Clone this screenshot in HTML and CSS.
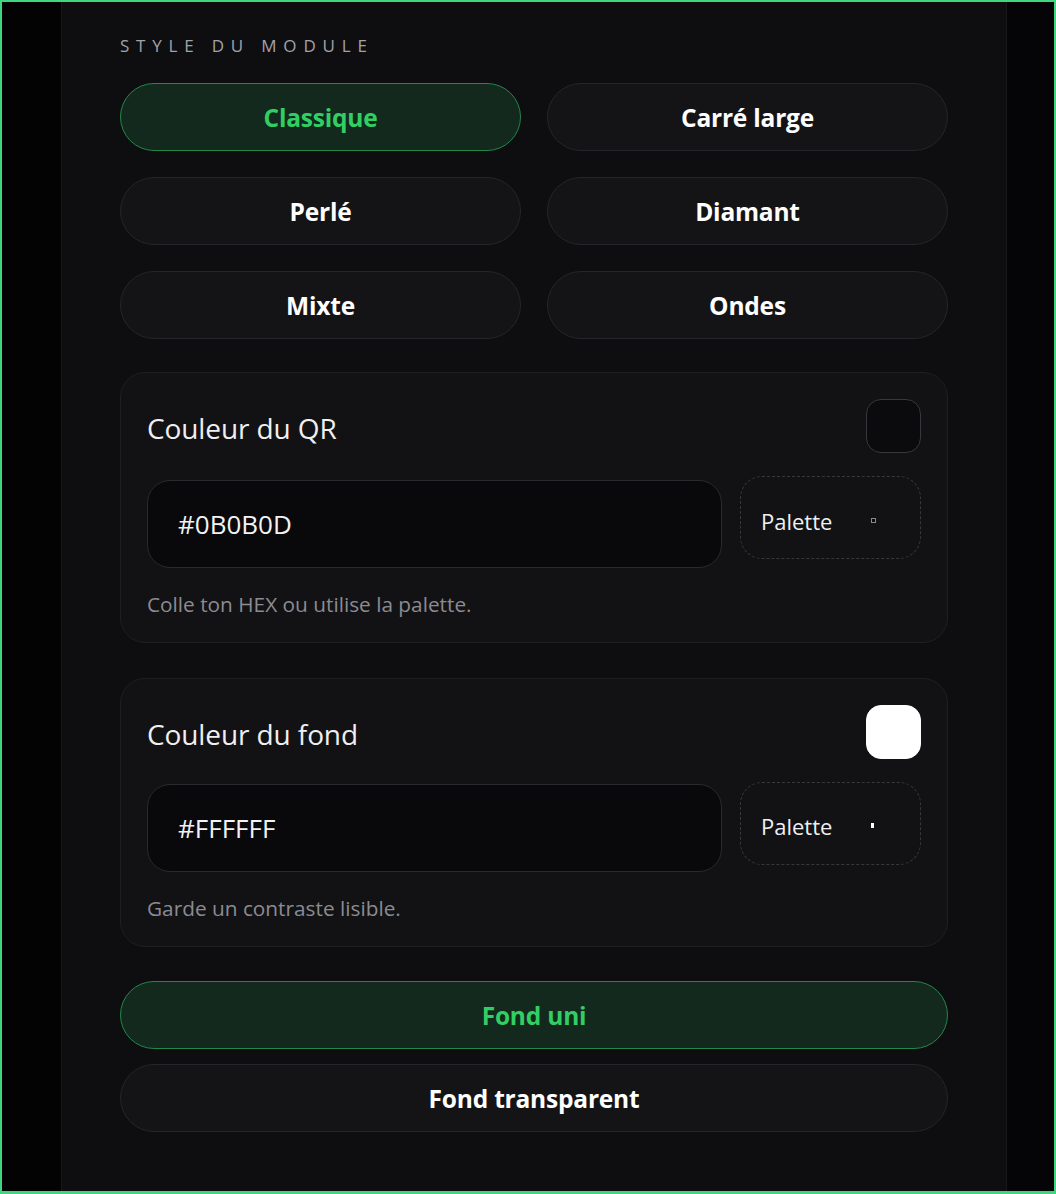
FILE: index.html
```html
<!DOCTYPE html>
<html lang="fr">
<head>
<meta charset="utf-8">
<title>Style du module</title>
<link rel="stylesheet" href="styles.css">
</head>
<body>
<div class="frame">
  <div class="side"></div>
  <main class="panel">
    <div class="label">STYLE DU MODULE</div>
    <div class="grid">
      <button class="opt active">Classique</button>
      <button class="opt">Carré large</button>
      <button class="opt">Perlé</button>
      <button class="opt">Diamant</button>
      <button class="opt">Mixte</button>
      <button class="opt">Ondes</button>
    </div>

    <section class="card">
      <div class="card-head">
        <span class="card-title">Couleur du QR</span>
        <span class="swatch dark"></span>
      </div>
      <div class="card-row">
        <div class="hex">#0B0B0D</div>
        <div class="palette palette-a">
          <span>Palette</span>
          <span class="mini mini-dark"></span>
        </div>
      </div>
      <p class="hint">Colle ton HEX ou utilise la palette.</p>
    </section>

    <section class="card card-b">
      <div class="card-head">
        <span class="card-title">Couleur du fond</span>
        <span class="swatch light"></span>
      </div>
      <div class="card-row">
        <div class="hex hex-b">#FFFFFF</div>
        <div class="palette palette-b">
          <span>Palette</span>
          <span class="mini mini-light"></span>
        </div>
      </div>
      <p class="hint">Garde un contraste lisible.</p>
    </section>

    <div class="stack">
      <button class="opt active">Fond uni</button>
      <button class="opt">Fond transparent</button>
    </div>
  </main>
  <div class="side side-r"></div>
</div>
</body>
</html>
```

FILE: styles.css
```css
* { box-sizing: border-box; }
html, body { margin: 0; padding: 0; }
body {
  background: #030304;
  font-family: "Open Sans", "Noto Sans", "Liberation Sans", sans-serif;
  color: #ececee;
}
.frame {
  width: 1056px;
  height: 1194px;
  border: 2px solid #3fd67e;
  border-bottom-width: 3px;
  display: flex;
  overflow: hidden;
  background: #030304;
}
.side { width: 59px; flex: none; background: #030304; }
.side-r { flex: 1; width: auto; background: #050507; }
.panel {
  width: 946px;
  flex: none;
  background: #0e0e10;
  border-left: 1px solid #18181b;
  border-right: 1px solid #18181b;
  padding: 34px 58px 0 58px;
}
.label {
  font-size: 17px;
  line-height: 20px;
  letter-spacing: 0.4em;
  color: #a2a2aa;
  font-weight: 400;
}
.grid {
  margin-top: 27px;
  display: grid;
  grid-template-columns: 1fr 1fr;
  column-gap: 26px;
  row-gap: 26px;
}
.opt {
  height: 68px;
  border-radius: 34px;
  border: 1px solid #25252a;
  background: #141416;
  color: #ffffff;
  font-family: "Open Sans", "Noto Sans", sans-serif;
  font-weight: 700;
  font-size: 24.5px;
  letter-spacing: -0.2px;
  cursor: pointer;
  padding: 0;
}
.opt.active {
  background: #13291d;
  border-color: #23874a;
  color: #31cf63;
}
.card {
  margin-top: 33px;
  background: #121214;
  border: 1px solid #1f1f22;
  border-radius: 25px;
  padding: 26px 26px 26px 26px;
}
.card-b { margin-top: 35px; }
.card-head {
  display: flex;
  align-items: center;
  justify-content: space-between;
  height: 54px;
}
.card-title {
  font-size: 28px;
  line-height: 34px;
  padding-top: 3px;
  color: #efeff1;
  letter-spacing: -0.1px;
}
.swatch {
  width: 55px;
  height: 54px;
  border-radius: 15px;
  border: 1.5px solid #38383c;
}
.swatch.dark { background: #0b0b0d; }
.swatch.light { background: #ffffff; border-color: #ffffff; }
.card-row {
  display: flex;
  align-items: flex-start;
  gap: 18px;
  margin-top: 23px;
}
.hex {
  flex: 1;
  height: 88px;
  margin-top: 4px;
  background: #09090b;
  border: 1px solid #2a2a2e;
  border-radius: 23px;
  display: flex;
  align-items: center;
  padding-left: 30px;
  font-size: 26px;
  color: #f2f2f4;
}
.hex-b { margin-top: 2px; }
.palette {
  width: 181px;
  height: 83px;
  border: 1.5px dashed #38383c;
  border-radius: 22px;
  display: flex;
  align-items: center;
  padding-left: 20px;
  font-size: 22px;
  color: #f0f0f2;
}
.palette-a { padding-top: 6px; }
.palette-b { padding-top: 4px; }
.mini {
  margin-left: 39px;
  width: 5px;
  height: 5px;
  border: 1px solid #8a8a8e;
}
.mini-dark { background: #0b0b0d; }
.mini-light { background: #ffffff; border-color: #ffffff; width: 3px; }
.hint {
  margin: 24px 0 0 0;
  font-size: 20.8px;
  line-height: 24px;
  color: #8b8b91;
}
.stack {
  margin-top: 34px;
  display: flex;
  flex-direction: column;
  gap: 15px;
}
```
